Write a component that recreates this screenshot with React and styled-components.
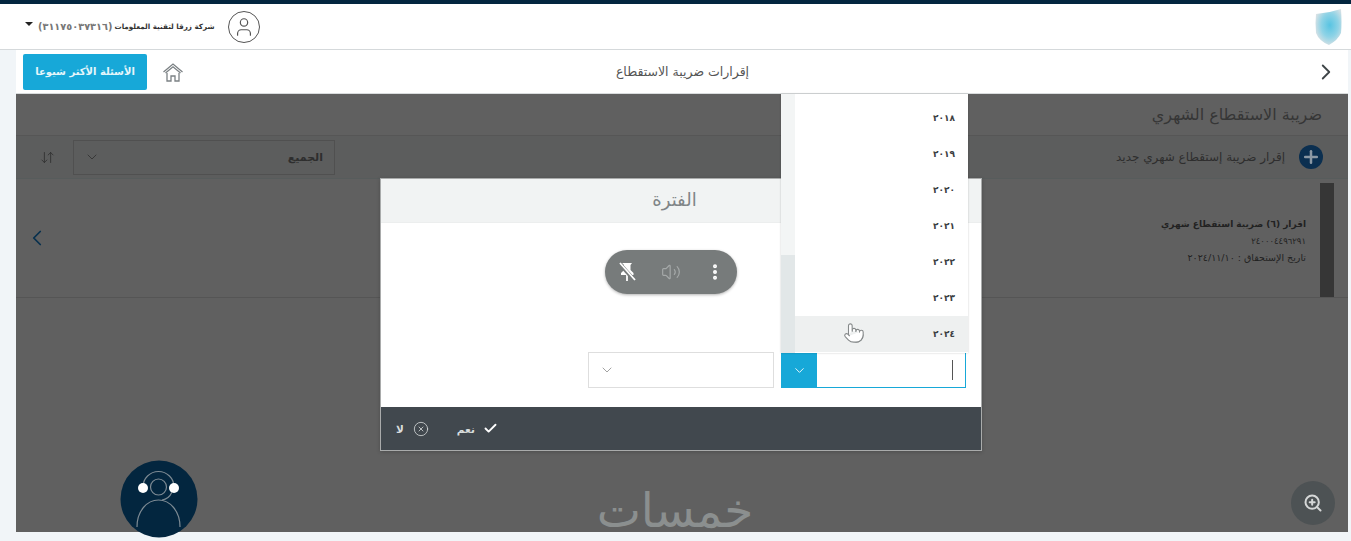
import React from "react";
import styled, { createGlobalStyle } from "styled-components";
import {
  ArrowDownUp,
  Check,
  ChevronDown,
  ChevronLeft,
  ChevronRight,
  CircleX,
  EllipsisVertical,
  Plus,
  Pointer,
  User,
  Volume2,
  ZoomIn,
} from "lucide-react";

const GlobalStyle = createGlobalStyle`
  html, body {
    margin: 0;
    padding: 0;
    background: #f1f5f8;
    overflow: hidden;
  }
  * { box-sizing: border-box; }
  body { font-family: "DejaVu Sans", "Noto Sans", sans-serif; }
`;

const Page = styled.div`
  width: 1351px;
  height: 541px;
  display: flex;
  flex-direction: column;
  overflow: hidden;
`;

const TopLine = styled.div`
  height: 4px;
  flex: none;
  background: #03263f;
`;

const Header = styled.header`
  height: 46px;
  flex: none;
  background: #fff;
  border-bottom: 1px solid #d5d9db;
  display: flex;
  align-items: center;
  justify-content: space-between;
  padding: 0 9px 0 25px;
`;

const Account = styled.div`
  display: flex;
  align-items: center;
  gap: 13px;
`;

const AccountText = styled.div`
  display: flex;
  align-items: center;
  gap: 2px;
`;

const Caret = styled.span`
  width: 0;
  height: 0;
  margin: 0 3px 5px 0;
  border-left: 4px solid transparent;
  border-right: 4px solid transparent;
  border-top: 4px solid #222;
`;

const AccountId = styled.span`
  font-size: 9.75px;
  font-weight: 700;
  color: #777;
`;

const AccountName = styled.span`
  font-size: 7.2px;
  font-weight: 700;
  color: #333;
`;

const AvatarRing = styled.div`
  width: 32px;
  height: 32px;
  margin-top: 1px;
  border: 1px solid #555;
  border-radius: 50%;
  display: flex;
  align-items: center;
  justify-content: center;
  color: #555;
`;

const Shell = styled.div`
  flex: 1;
  display: flex;
  flex-direction: column;
  padding: 0 3px 9px 16px;
`;

const Toolbar = styled.div`
  height: 43px;
  flex: none;
  background: #fff;
  display: flex;
  align-items: center;
  padding: 0 9px 0 7px;
  gap: 15px;
`;

const FaqButton = styled.button`
  width: 124px;
  height: 36px;
  border: none;
  border-radius: 2px;
  background: #17a8d8;
  color: #e6f6fb;
  font: 700 10px "DejaVu Sans", sans-serif;
`;

const HomeIcon = styled.svg`
  width: 22px;
  height: 22px;
  flex: none;
  fill: none;
  stroke: #7b8184;
  stroke-width: 1.3;
`;

const ToolbarTitle = styled.div`
  flex: 1;
  text-align: center;
  padding-right: 132px;
  font-size: 12.5px;
  color: #555;
`;

const Stage = styled.main`
  position: relative;
  flex: 1;
  background: #606060;
  border-top: 1px solid #d9dcdd;
`;

const TitleRow = styled.div`
  height: 42px;
  border-bottom: 1px solid #565656;
  display: flex;
  align-items: center;
  justify-content: flex-end;
  padding-right: 26px;
  font-size: 16px;
  color: #363636;
`;

const FilterRow = styled.div`
  height: 43px;
  background: #5c5d5d;
  border-bottom: 1px solid #575c5c;
  display: flex;
  align-items: center;
  padding: 0 25px 0 14px;
`;

const SortButton = styled.div`
  width: 34px;
  margin-right: 9px;
  color: #2e2e2e;
  display: flex;
  justify-content: center;
`;

const FilterSelect = styled.div`
  width: 262px;
  height: 35px;
  border: 1px solid #505050;
  display: flex;
  align-items: center;
  justify-content: space-between;
  padding: 0 11px 0 10px;
  color: #2e2e2e;
  font-size: 11px;
  font-weight: 700;
`;

const NewRow = styled.div`
  margin-left: auto;
  display: flex;
  align-items: center;
  gap: 14px;
  font-size: 12px;
  color: #2e2e2e;
`;

const PlusBadge = styled.span`
  width: 24px;
  height: 24px;
  border-radius: 50%;
  background: #0b2f50;
  color: #8b98a4;
  display: flex;
  align-items: center;
  justify-content: center;
`;

const ListRow = styled.section`
  height: 119px;
  border-bottom: 1px solid #555;
  display: flex;
  align-items: center;
  justify-content: space-between;
  padding: 0 14px 0 8px;
  color: #07304e;
`;

const ItemBody = styled.div`
  display: flex;
  align-items: stretch;
  gap: 14px;
  height: 114px;
  margin-top: 4px;
`;

const ItemText = styled.div`
  direction: rtl;
  align-self: center;
  display: flex;
  flex-direction: column;
  gap: 5px;
  padding-top: 2px;
  color: #222;
  font-size: 9.5px;
  line-height: 12px;
`;

const ItemTitle = styled.div`
  font-size: 9px;
  font-weight: 700;
`;

const ItemNumber = styled.div`
  font-size: 8.5px;
`;

const ItemStripe = styled.div`
  width: 14px;
  background: #363636;
`;

const Modal = styled.div`
  position: absolute;
  left: 364px;
  top: 84px;
  width: 602px;
  height: 273px;
  display: flex;
  flex-direction: column;
  border: 1px solid #a9abab;
  background: #fff;
  box-shadow: 0 1px 4px rgba(0, 0, 0, 0.2);
`;

const ModalHead = styled.div`
  height: 44px;
  background: #f1f3f3;
  border-bottom: 1px solid #eceeee;
  display: flex;
  align-items: center;
  justify-content: center;
  padding: 0 13px 3px 0;
  font-size: 18px;
  color: #808587;
`;

const ModalBody = styled.div`
  flex: 1;
  display: flex;
  align-items: flex-end;
  gap: 7px;
  padding: 0 15px 19px 207px;
`;

const Pill = styled.div`
  position: absolute;
  left: 224px;
  top: 71px;
  width: 132px;
  height: 44px;
  border-radius: 22px;
  background: #777b7b;
  box-shadow: 0 1px 3px rgba(0, 0, 0, 0.3);
  display: flex;
  align-items: center;
  justify-content: space-between;
  padding: 0 11px;
  color: #fff;
`;

const PillSlot = styled.span`
  width: 22px;
  display: flex;
  justify-content: center;
  color: ${({ $muted }) => ($muted ? "#a5a9a9" : "#fff")};
`;

const PlainSelect = styled.div`
  width: 186px;
  height: 36px;
  border: 1px solid #dedede;
  display: flex;
  align-items: center;
  padding-left: 10px;
  color: #8a8a8a;
`;

const ActiveSelect = styled.div`
  width: 185px;
  height: 36px;
  border: 1px solid #17a8d8;
  display: flex;
  align-items: stretch;
  background: #fff;
`;

const SelectArrow = styled.span`
  width: 36px;
  margin: -1px 0 -1px -1px;
  background: #17a8d8;
  color: #e6f6fb;
  display: flex;
  align-items: center;
  justify-content: center;
`;

const InputCaret = styled.span`
  width: 1px;
  height: 20px;
  margin: auto 12px auto auto;
  background: #555;
`;

const ModalFoot = styled.footer`
  height: 43px;
  background: #41484e;
  display: flex;
  align-items: center;
  padding: 0 10px 0 15px;
  color: #d8dcdc;
  font-size: 10.5px;
  font-weight: 700;
`;

const FootAction = styled.span`
  display: flex;
  align-items: center;
  gap: ${({ $gap }) => $gap}px;
  margin-right: ${({ $after }) => $after || 0}px;
`;

const Dropdown = styled.div`
  position: absolute;
  left: 765px;
  top: 0;
  width: 187px;
  height: 259px;
  display: flex;
  background: #fff;
  box-shadow: 0 0 2px rgba(0, 0, 0, 0.2);
`;

const ScrollTrack = styled.div`
  width: 14px;
  background: linear-gradient(#f3f5f5 0 62%, #e2e7e8 62%);
`;

const OptionList = styled.ul`
  flex: 1;
  margin: 6px 0 0;
  padding: 0;
  list-style: none;
`;

const Option = styled.li`
  height: 36px;
  padding-right: 13px;
  display: flex;
  align-items: center;
  justify-content: flex-end;
  font-size: 9px;
  font-weight: 700;
  color: #3c4043;
  background: ${({ $hover }) => ($hover ? "#eef0f0" : "transparent")};
`;

const HandCursor = styled.span`
  position: absolute;
  left: 48px;
  top: 6px;
  color: #85898a;
  display: flex;
`;

const OptionAnchor = styled.div`
  position: relative;
  width: 100%;
  height: 100%;
  display: flex;
  align-items: center;
  justify-content: flex-end;
`;

const Watermark = styled.div`
  position: absolute;
  left: 578px;
  top: 390px;
  width: 162px;
  text-align: center;
  direction: rtl;
  font-size: 47px;
  line-height: 54px;
  white-space: nowrap;
  color: #8b8f8f;
`;

const Assistant = styled.svg`
  position: absolute;
  left: 104px;
  top: 366px;
  width: 78px;
  height: 78px;
`;

const ZoomButton = styled.div`
  position: absolute;
  left: 1275px;
  top: 387px;
  width: 44px;
  height: 44px;
  border-radius: 50%;
  background: #4d5254;
  color: #d5d7d7;
  display: flex;
  align-items: center;
  justify-content: center;
`;

const years = ["٢٠١٨", "٢٠١٩", "٢٠٢٠", "٢٠٢١", "٢٠٢٢", "٢٠٢٣", "٢٠٢٤"];

export default function App() {
  return (
    <>
      <GlobalStyle />
      <Page>
        <TopLine />
        <Header>
          <Account>
            <AccountText>
              <Caret />
              <AccountId>(٣١١٧٥٠٣٧٣١٦)</AccountId>
              <AccountName dir="rtl">شركة زرقا لتقنية المعلومات</AccountName>
            </AccountText>
            <AvatarRing>
              <User size={22} strokeWidth={1.3} />
            </AvatarRing>
          </Account>
          <svg width="27" height="36" viewBox="0 0 27 36">
            <defs>
              <radialGradient id="shield" cx="0.55" cy="0.45" r="0.6">
                <stop offset="0" stopColor="#58c4e2" />
                <stop offset="0.55" stopColor="#8fd3e6" />
                <stop offset="1" stopColor="#dce2e5" />
              </radialGradient>
            </defs>
            <path d="M1 5 Q14 4 26 0 Q27 14 26 24 Q23 31 14 36 Q4 32 1 24 Q0 14 1 5 Z" fill="url(#shield)" />
          </svg>
        </Header>
        <Shell>
          <Toolbar>
            <FaqButton dir="rtl">الأسئلة الأكثر شيوعا</FaqButton>
            <HomeIcon viewBox="0 0 22 22">
              <path d="M1.5 11 11 3l9.5 8" />
              <path d="M3.5 12 11 5.8l7.5 6.2" />
              <path d="M5 12v8h4v-5h4v5h4v-8" />
            </HomeIcon>
            <ToolbarTitle>
              <span dir="rtl">إقرارات ضريبة الاستقطاع</span>
            </ToolbarTitle>
            <ChevronRight size={26} strokeWidth={1.7} color="#3f4548" />
          </Toolbar>
          <Stage>
            <TitleRow>
              <span dir="rtl">ضريبة الاستقطاع الشهري</span>
            </TitleRow>
            <FilterRow>
              <SortButton>
                <ArrowDownUp size={15} strokeWidth={1.3} />
              </SortButton>
              <FilterSelect>
                <ChevronDown size={16} strokeWidth={1.2} />
                <span>الجميع</span>
              </FilterSelect>
              <NewRow>
                <span dir="rtl">إقرار ضريبة إستقطاع شهري جديد</span>
                <PlusBadge>
                  <Plus size={20} strokeWidth={3} />
                </PlusBadge>
              </NewRow>
            </FilterRow>
            <ListRow>
              <ChevronLeft size={26} strokeWidth={1.6} />
              <ItemBody>
                <ItemText>
                  <ItemTitle>اقرار (٦) ضريبة استقطاع شهري</ItemTitle>
                  <ItemNumber>٢٤٠٠٠٤٤٩٦٢٩١</ItemNumber>
                  <div>تاريخ الإستحقاق : ٢٠٢٤/١١/١٠</div>
                </ItemText>
                <ItemStripe />
              </ItemBody>
            </ListRow>

            <Watermark>خمسات</Watermark>
            <Assistant viewBox="0 0 78 78">
              <circle cx="39" cy="39" r="38.5" fill="#03263f" />
              <g fill="none" stroke="#7d8a93" strokeWidth="1.2">
                <circle cx="38.5" cy="27" r="8" />
                <path d="M23 27a15.5 15.5 0 0 1 31 0" />
                <path d="M52 32q-3 7-10 8" />
                <path d="M17 67c0-16 10-27 21.5-27S60 51 60 67" />
              </g>
              <circle cx="23" cy="28" r="5" fill="#fff" />
              <circle cx="54" cy="28" r="5" fill="#fff" />
            </Assistant>
            <ZoomButton>
              <ZoomIn size={20} strokeWidth={2.4} />
            </ZoomButton>

            <Modal>
              <ModalHead>الفترة</ModalHead>
              <ModalBody>
                <Pill>
                  <PillSlot>
                    <svg width="20" height="22" viewBox="0 0 20 22">
                      <path d="M5 2h10l-1.5 2v5l3 3v2H4v-2l3-3V4z" fill="#fff" />
                      <path d="M10 14v6" stroke="#fff" strokeWidth="1.8" />
                      <path d="M2.5 2.5 17.5 19.5" stroke="#777b7b" strokeWidth="4" />
                      <path d="M3 2 18 19" stroke="#fff" strokeWidth="1.8" />
                    </svg>
                  </PillSlot>
                  <PillSlot $muted>
                    <Volume2 size={20} strokeWidth={1.4} />
                  </PillSlot>
                  <PillSlot>
                    <EllipsisVertical size={20} strokeWidth={2.8} />
                  </PillSlot>
                </Pill>
                <PlainSelect>
                  <ChevronDown size={16} strokeWidth={1.2} />
                </PlainSelect>
                <ActiveSelect>
                  <SelectArrow>
                    <ChevronDown size={15} strokeWidth={1.6} />
                  </SelectArrow>
                  <InputCaret />
                </ActiveSelect>
              </ModalBody>
              <ModalFoot>
                <FootAction $gap={9} $after={28}>
                  <span>لا</span>
                  <CircleX size={16} strokeWidth={1.2} />
                </FootAction>
                <FootAction $gap={8}>
                  <span>نعم</span>
                  <Check size={15} strokeWidth={3} color="#fff" />
                </FootAction>
              </ModalFoot>
            </Modal>

            <Dropdown>
              <ScrollTrack />
              <OptionList>
                {years.map((year, i) => (
                  <Option key={year} $hover={i === years.length - 1}>
                    {i === years.length - 1 ? (
                      <OptionAnchor>
                        <HandCursor>
                          <Pointer size={22} strokeWidth={1.2} fill="#fff" />
                        </HandCursor>
                        {year}
                      </OptionAnchor>
                    ) : (
                      year
                    )}
                  </Option>
                ))}
              </OptionList>
            </Dropdown>
          </Stage>
        </Shell>
      </Page>
    </>
  );
}
